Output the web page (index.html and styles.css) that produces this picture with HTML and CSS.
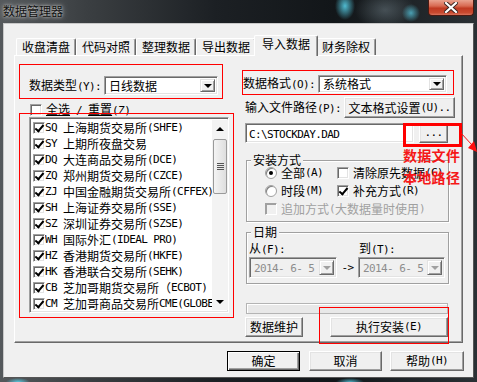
FILE: index.html
```html
<!DOCTYPE html>
<html lang="zh-CN">
  <head>
    <meta charset="UTF-8" />
    <title>数据管理器</title>
    <link rel="stylesheet" href="styles.css">
  </head>
  <body>
    <div class="window">
      <div class="titlebar">
        <span class="title">数据管理器</span>
        <div class="close">
          <svg width="14" height="11" viewBox="0 0 14 11">
            <path d="M2 1 L12 10 M12 1 L2 10" stroke="#3a2420" stroke-width="4" stroke-linecap="square" />
            <path d="M2 1 L12 10 M12 1 L2 10" stroke="#ffffff" stroke-width="2.2" stroke-linecap="square" />
          </svg>
        </div>
      </div>

      <div class="client">
        <div class="tabs">
          <div class="tab">收盘清盘</div>
          <div class="tab">代码对照</div>
          <div class="tab">整理数据</div>
          <div class="tab">导出数据</div>
          <div class="tab active">导入数据</div>
          <div class="tab">财务除权</div>
        </div>

        <div class="panel">
          <div class="col-left">
            <div class="row row-type">
              <span class="label">数据类型<span class="a">(Y):</span></span>
              <div class="combo combo-type">
                <span class="combo-val">日线数据</span>
                <span class="drop"><i class="tri"></i></span>
              </div>
            </div>

            <div class="row row-all">
              <span class="cb"></span>
              <span class="cb-text"><u>全选</u><span class="a"> / </span><u>重置</u><span class="a">(Z)</span></span>
            </div>

            <div class="listbox">
              <div class="items">
                <div class="item"><span class="cb on"></span><span class="a">SQ </span>上海期货交易所<span class="a">(SHFE)</span></div>
                <div class="item"><span class="cb on"></span><span class="a">SY </span>上期所夜盘交易</div>
                <div class="item"><span class="cb on"></span><span class="a">DQ </span>大连商品交易所<span class="a">(DCE)</span></div>
                <div class="item"><span class="cb on"></span><span class="a">ZQ </span>郑州期货交易所<span class="a">(CZCE)</span></div>
                <div class="item"><span class="cb on"></span><span class="a">ZJ </span>中国金融期货交易所<span class="a">(CFFEX)</span></div>
                <div class="item"><span class="cb on"></span><span class="a">SH </span>上海证券交易所<span class="a">(SSE)</span></div>
                <div class="item"><span class="cb on"></span><span class="a">SZ </span>深圳证券交易所<span class="a">(SZSE)</span></div>
                <div class="item"><span class="cb on"></span><span class="a">WH </span>国际外汇<span class="a">(IDEAL PRO)</span></div>
                <div class="item"><span class="cb on"></span><span class="a">HZ </span>香港期货交易所<span class="a">(HKFE)</span></div>
                <div class="item"><span class="cb on"></span><span class="a">HK </span>香港联合交易所<span class="a">(SEHK)</span></div>
                <div class="item"><span class="cb on"></span><span class="a">CB </span>芝加哥期货交易所（<span class="a">ECBOT)</span></div>
                <div class="item"><span class="cb on"></span><span class="a">CM </span>芝加哥商品交易所<span class="a">CME(GLOBEX)</span></div>
              </div>
              <div class="scrollbar">
                <div class="sb-btn"><i class="tri up"></i></div>
                <div class="thumb"><i class="grip"></i></div>
                <div class="track"></div>
                <div class="sb-btn"><i class="tri"></i></div>
              </div>
            </div>
          </div>

          <div class="col-right">
            <div class="row row-format">
              <span class="label">数据格式<span class="a">(O):</span></span>
              <div class="combo combo-format">
                <span class="combo-val">系统格式</span>
                <span class="drop"><i class="tri"></i></span>
              </div>
            </div>

            <div class="row row-path-label">
              <span class="label path-label">输入文件路径<span class="a">(P):</span></span>
              <div class="btn btn-text">文本格式设置<span class="a">(U)..</span></div>
            </div>

            <div class="row row-path">
              <div class="field path"><span class="a">C:\STOCKDAY.DAD</span></div>
              <div class="btn btn-browse"><span class="a">...</span></div>
            </div>

            <fieldset class="group group-mode">
              <legend>安装方式</legend>
              <div class="group-body mode-grid">
                <div class="opt"><span class="radio on"></span>全部<span class="a">(A)</span></div>
                <div class="opt"><span class="cb"></span>清除原先数据<span class="a">(C)</span></div>
                <div class="opt"><span class="radio"></span>时段<span class="a">(M)</span></div>
                <div class="opt"><span class="cb on"></span>补充方式<span class="a">(R)</span></div>
                <div class="opt disabled span2"><span class="cb off"></span>追加方式<span class="a">(</span>大数据量时使用<span class="a">)</span></div>
              </div>
            </fieldset>

            <fieldset class="group group-date">
              <legend>日期</legend>
              <div class="group-body">
                <div class="date-labels">
                  <span class="from">从<span class="a">(F):</span></span>
                  <span>到<span class="a">(T):</span></span>
                </div>
                <div class="date-row">
                  <div class="combo combo-date">
                    <span class="combo-val"><span class="a">2014- 6- 5</span></span>
                    <span class="drop"><i class="tri"></i></span>
                  </div>
                  <span class="arrow a">-&gt;</span>
                  <div class="combo combo-date combo-date2">
                    <span class="combo-val"><span class="a">2014- 6- 5</span></span>
                    <span class="drop"><i class="tri"></i></span>
                  </div>
                </div>
              </div>
            </fieldset>

            <div class="progress"></div>

            <div class="row row-actions">
              <div class="btn btn-maint">数据维护</div>
              <div class="btn btn-install">执行安装<span class="a">(E)</span></div>
            </div>
          </div>
        </div>

        <div class="footer">
          <div class="btn btn-foot default">确定</div>
          <div class="btn btn-foot">取消</div>
          <div class="btn btn-foot btn-help">帮助<span class="a">(H)</span></div>
        </div>
      </div>

      <!-- red annotations drawn on top of the screenshot -->
      <div class="mark mark-type"></div>
      <div class="mark mark-list"></div>
      <div class="mark mark-format"></div>
      <div class="mark mark-browse"></div>
      <div class="mark mark-install"></div>
      <div class="note note-1">数据文件</div>
      <div class="note note-2">本地路径</div>
      <svg class="note-arrow" width="477" height="382" viewBox="0 0 477 382">
        <line x1="461" y1="133" x2="472" y2="145" stroke="#ff1010" stroke-width="1" />
        <polygon points="477,152 468,148 474,141" fill="#ff1010" />
      </svg>
    </div>
  </body>
</html>
```

FILE: styles.css
```css
* {
  box-sizing: border-box;
}
body {
  margin: 0;
  width: 477px;
  height: 382px;
  overflow: hidden;
  background: #1e2428;
  font-family: "Noto Sans CJK SC", "Noto Sans", sans-serif;
  font-size: 12px;
  color: #000;
}
.a {
  font-family: "DejaVu Sans Mono", "Liberation Mono", monospace;
  font-size: 11px;
  letter-spacing: -0.6px;
  white-space: pre;
}
.window {
  position: relative;
  width: 477px;
  height: 382px;
  background:
    radial-gradient(ellipse 10px 14px at 345px 6px, rgba(90, 215, 240, 0.85), rgba(90, 215, 240, 0) 100%),
    radial-gradient(circle 9px at 411px 13px, rgba(90, 210, 235, 0.7), rgba(90, 210, 235, 0) 100%),
    radial-gradient(ellipse 30px 20px at 385px 10px, rgba(150, 170, 180, 0.35), rgba(150, 170, 180, 0) 100%),
    radial-gradient(ellipse 12px 4px at 18px 382px, rgba(90, 210, 235, 0.9), rgba(90, 210, 235, 0) 100%),
    radial-gradient(ellipse 14px 4px at 350px 382px, rgba(90, 210, 235, 0.8), rgba(90, 210, 235, 0) 100%),
    linear-gradient(to right, #55595c 0%, #3b3f42 18%, #1c2024 45%, #121619 70%, #2a3034 100%);
}

/* title bar */
.titlebar {
  display: flex;
  height: 23px;
}
.title {
  margin: 3px 0 0 3px;
  line-height: 15px;
  color: #111;
  text-shadow: 0 0 3px #d8d8d8, 0 0 6px #b0b0b0;
}
.close {
  margin: 0 3px 0 auto;
  width: 46px;
  height: 16px;
  border: 1px solid #4a1a12;
  border-top: none;
  border-radius: 0 0 4px 4px;
  background: linear-gradient(#e9a28f, #d86a52 40%, #c03a22 55%, #c84a30 85%, #d9735c);
  display: flex;
  align-items: center;
  justify-content: center;
}

/* dialog body */
.client {
  margin-left: 3px;
  width: 471px;
  height: 355px;
  background: #f0f0f0;
  border: 1px solid;
  border-color: #c8c8c8 #555 #555 #c8c8c8;
}
.tabs {
  display: flex;
  align-items: flex-end;
  height: 20px;
  margin: 11px 0 0 12px;
}
.tab {
  width: 60px;
  height: 17px;
  line-height: 16px;
  text-align: center;
  background: #f0f0f0;
  border-top: 1px solid #fff;
  border-left: 1px solid #fff;
  border-right: 1px solid #696969;
  border-radius: 2px 2px 0 0;
  box-shadow: inset -1px 0 #a0a0a0;
}
.tab.active {
  position: relative;
  z-index: 1;
  width: 64px;
  height: 21px;
  line-height: 16px;
  margin: 0 -2px -1px;
}
.panel {
  display: flex;
  margin-left: 10px;
  width: 449px;
  height: 288px;
  border: 1px solid;
  border-color: #fff #696969 #696969 #fff;
  box-shadow: inset -1px -1px #a0a0a0;
}

/* generic controls */
.row {
  display: flex;
  align-items: center;
}
.label {
  line-height: 14px;
  white-space: nowrap;
}
.btn {
  display: flex;
  align-items: center;
  justify-content: center;
  height: 20px;
  line-height: 14px;
  background: #f0f0f0;
  border: 1px solid;
  border-color: #fff #696969 #696969 #fff;
  box-shadow: inset -1px -1px #a0a0a0, inset 1px 1px #e3e3e3;
  white-space: nowrap;
}
.btn.default {
  border-color: #000;
  box-shadow: inset 1px 1px #fff, inset -1px -1px #696969, inset -2px -2px #a0a0a0;
}
.field,
.combo,
.listbox {
  background: #fff;
  border: 1px solid;
  border-color: #a0a0a0 #fff #fff #a0a0a0;
  box-shadow: inset 1px 1px #696969, inset -1px -1px #e3e3e3;
}
.combo {
  display: flex;
  align-items: center;
  padding: 2px;
}
.combo-val {
  flex: 1;
  padding-left: 2px;
  line-height: 14px;
  white-space: nowrap;
}
.drop {
  width: 15px;
  height: 100%;
  display: flex;
  align-items: center;
  justify-content: center;
  background: #f0f0f0;
  border: 1px solid;
  border-color: #e3e3e3 #696969 #696969 #e3e3e3;
  box-shadow: inset 1px 1px #fff, inset -1px -1px #a0a0a0;
}
.tri {
  width: 0;
  height: 0;
  border-left: 4px solid transparent;
  border-right: 4px solid transparent;
  border-top: 4px solid #000;
}
.tri.up {
  border-top: none;
  border-bottom: 4px solid #000;
}
.cb,
.radio {
  flex: none;
  width: 12px;
  height: 12px;
  background: #fff;
  border: 1px solid;
  border-color: #a0a0a0 #fff #fff #a0a0a0;
  box-shadow: inset 1px 1px #696969, inset -1px -1px #e3e3e3;
  position: relative;
}
.cb.on::after {
  content: "";
  position: absolute;
  left: 3px;
  top: 0px;
  width: 3px;
  height: 7px;
  border: solid #000;
  border-width: 0 2px 2px 0;
  transform: rotate(40deg);
}
.cb.off {
  background: #f0f0f0;
  box-shadow: inset 1px 1px #a0a0a0;
}
.radio {
  border-radius: 50%;
  border-color: #a0a0a0;
  box-shadow: inset 1px 1px #808080;
}
.radio.on::after {
  content: "";
  position: absolute;
  left: 3px;
  top: 3px;
  width: 4px;
  height: 4px;
  border-radius: 50%;
  background: #000;
}

/* left column */
.col-left {
  margin-left: 14px;
  width: 200px;
}
.row-type {
  margin-top: 20px;
  height: 19px;
}
.row-type .label {
  width: 75px;
}
.combo-type {
  width: 114px;
  height: 19px;
}
.row-all {
  margin-top: 8px;
  height: 14px;
}
.row-all .cb {
  margin-left: 1px;
}
.cb-text {
  margin-left: 4px;
  line-height: 14px;
}
.listbox {
  display: flex;
  margin-top: 0;
  width: 200px;
  height: 196px;
  padding: 2px 0 2px 2px;
}
.items {
  flex: 1;
  overflow: hidden;
}
.item {
  display: flex;
  align-items: center;
  height: 16px;
  padding-left: 1px;
  line-height: 14px;
  white-space: nowrap;
}
.scrollbar {
  width: 16px;
  display: flex;
  flex-direction: column;
  background: #f3f3f3;
}
.sb-btn {
  height: 17px;
  display: flex;
  align-items: center;
  justify-content: center;
}
.thumb {
  margin: 2px 1px 0;
  height: 55px;
  border: 1px solid #9a9a9a;
  border-radius: 2px;
  background: linear-gradient(to right, #f4f4f4, #dedede);
  display: flex;
  align-items: center;
  justify-content: center;
}
.grip {
  width: 7px;
  height: 7px;
  background: repeating-linear-gradient(#555 0 1px, transparent 1px 2px);
}
.track {
  flex: 1;
}

/* right column */
.col-right {
  margin-left: 14px;
  width: 212px;
}
.row-format {
  margin-top: 19px;
  height: 18px;
}
.row-format .label {
  width: 75px;
}
.combo-format {
  width: 129px;
  height: 18px;
}
.row-path-label {
  margin-top: 4px;
  height: 21px;
}
.path-label {
  width: 101px;
  padding-left: 2px;
}
.btn-text {
  width: 111px;
  height: 21px;
}
.row-path {
  margin-top: 5px;
  height: 20px;
}
.path {
  margin-left: 2px;
  width: 169px;
  height: 20px;
  padding-left: 3px;
  line-height: 17px;
}
.btn-browse {
  margin-left: 5px;
  width: 29px;
  height: 19px;
}
.group {
  margin: 0 0 0 3px;
  padding: 0;
  width: 203px;
  border: 1px solid #a0a0a0;
  box-shadow: inset 1px 1px #fff, 1px 1px #fff;
}
.group legend {
  margin-left: 4px;
  padding: 0 2px;
  line-height: 14px;
  background: #f0f0f0;
}
.group-mode {
  margin-top: 10px;
}
.mode-grid {
  display: grid;
  grid-template-columns: 72px auto;
  grid-auto-rows: 18px;
  margin-top: -3px;
  padding: 0 0 3px 18px;
}
.opt {
  display: flex;
  align-items: center;
  line-height: 14px;
  white-space: nowrap;
}
.opt .cb,
.opt .radio {
  margin-right: 4px;
}
.opt.span2 {
  grid-column: 1 / 3;
}
.opt.disabled {
  color: #a0a0a0;
}
.group-date {
  margin-top: 3px;
}
.group-date .group-body {
  padding: 0 0 5px 2px;
}
.date-labels {
  display: flex;
  margin-top: 2px;
  height: 14px;
  line-height: 14px;
}
.date-labels .from {
  width: 110px;
}
.date-row {
  display: flex;
  align-items: center;
  margin-top: 2px;
  height: 21px;
}
.combo-date {
  width: 88px;
  height: 21px;
  background: #f0f0f0;
  color: #8d8d8d;
}
.combo-date2 {
  width: 87px;
}
.combo-date .tri {
  border-top-color: #a0a0a0;
}
.arrow {
  width: 21px;
  text-align: center;
}
.progress {
  margin: 19px 0 0 3px;
  width: 202px;
  height: 11px;
  border: 1px solid #b4b4b4;
  background: #e8e8e8;
  box-shadow: inset 1px 1px #fff;
}
.row-actions {
  margin-top: 3px;
}
.btn-maint {
  margin-left: 2px;
  width: 58px;
}
.btn-install {
  margin-left: 27px;
  width: 118px;
}

/* dialog buttons */
.footer {
  display: flex;
  justify-content: flex-end;
  margin-top: 8px;
  padding-right: 9px;
}
.btn-foot {
  width: 73px;
  margin-left: 9px;
}
.btn-help {
  width: 74px;
  margin-left: 8px;
}

/* annotations */
.mark {
  position: absolute;
  border: 1px solid #ff0000;
}
.mark-type {
  left: 19px;
  top: 64px;
  width: 204px;
  height: 35px;
}
.mark-list {
  left: 19px;
  top: 113px;
  width: 215px;
  height: 205px;
}
.mark-format {
  left: 242px;
  top: 70px;
  width: 212px;
  height: 25px;
}
.mark-browse {
  left: 403px;
  top: 123px;
  width: 59px;
  height: 24px;
  border-width: 3px;
}
.mark-install {
  left: 319px;
  top: 307px;
  width: 130px;
  height: 37px;
}
.note {
  position: absolute;
  left: 403px;
  color: #f51818;
  font-size: 14px;
  font-weight: bold;
  line-height: 16px;
  letter-spacing: 0.3px;
}
.note-1 {
  top: 147px;
}
.note-2 {
  top: 169px;
}
.note-arrow {
  position: absolute;
  left: 0;
  top: 0;
}
```
